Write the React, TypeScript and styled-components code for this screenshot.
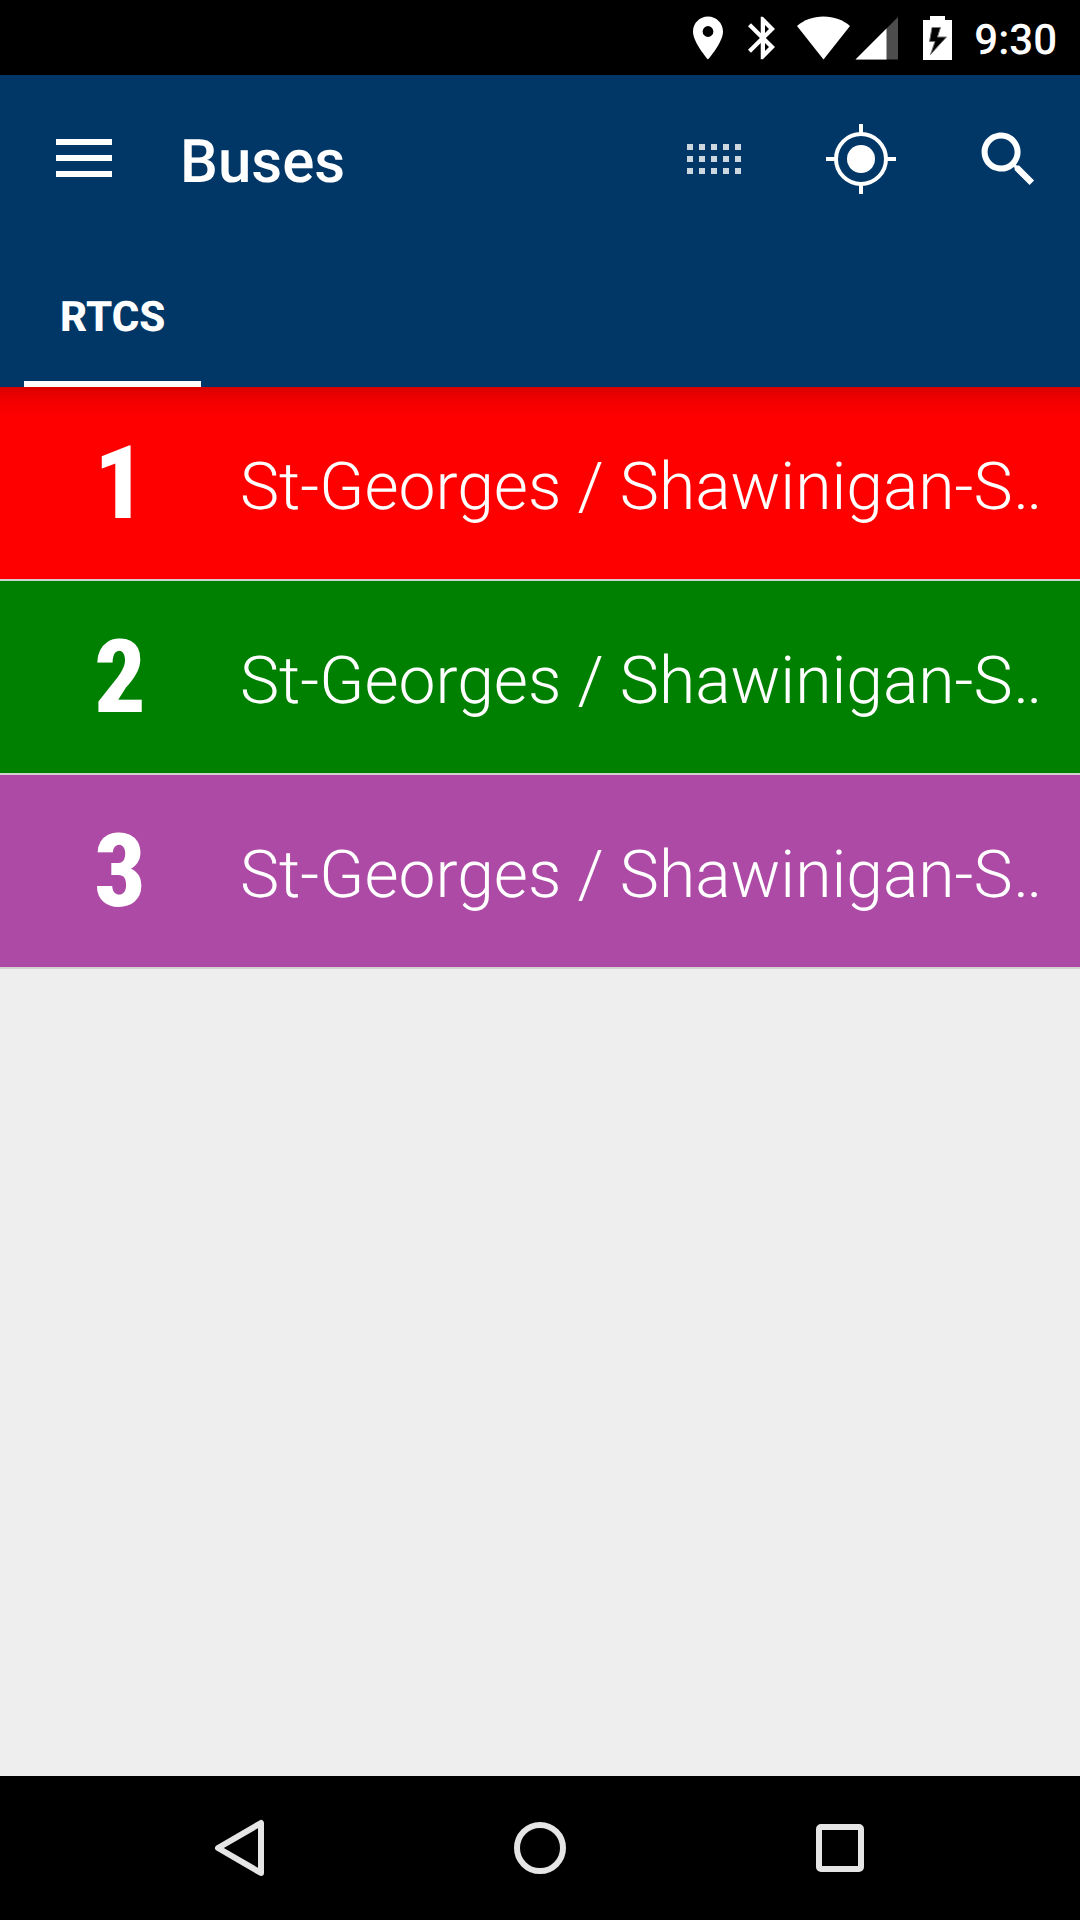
import React from "react";
import styled, { createGlobalStyle } from "styled-components";

const GlobalStyle = createGlobalStyle`
  *, *::before, *::after { box-sizing: border-box; }
  body {
    margin: 0;
    background: #eeeeee;
    font-family: Roboto, "Liberation Sans", sans-serif;
    color: #ffffff;
    text-rendering: geometricPrecision;
  }
  button, a { font: inherit; color: inherit; }
  svg { display: block; flex: none; }
`;

const Screen = styled.div`
  min-height: 100vh;
  display: flex;
  flex-direction: column;
`;

const StatusBar = styled.div`
  height: 75px;
  padding: 0 23px;
  display: flex;
  align-items: center;
  justify-content: flex-end;
  gap: 22px;
  background: #000000;
`;

const Radios = styled.div`
  display: flex;
  gap: 5px;
`;

const Clock = styled.time`
  padding-top: 6px;
  font-size: 42px;
  font-weight: 500;
  line-height: 50px;
`;

const Header = styled.header`
  position: relative;
  z-index: 1;
  background: #003767;

  &::after {
    content: "";
    position: absolute;
    top: 100%;
    left: 0;
    right: 0;
    height: 36px;
    pointer-events: none;
    background: linear-gradient(
      rgba(0, 0, 0, 0.16),
      rgba(0, 0, 0, 0.1) 16%,
      rgba(0, 0, 0, 0.04) 45%,
      rgba(0, 0, 0, 0.01) 75%,
      rgba(0, 0, 0, 0)
    );
  }
`;

const Toolbar = styled.div`
  height: 168px;
  display: flex;
  align-items: center;
`;

const IconButton = styled.button<{ $wide?: boolean }>`
  width: ${(p) => (p.$wide ? 168 : 144)}px;
  height: 168px;
  padding: 0;
  border: 0;
  background: none;
  display: flex;
  align-items: center;
  justify-content: center;
`;

const Title = styled.h1`
  flex: 1;
  margin: 0;
  padding: 6px 0 0 12px;
  font-size: 60px;
  font-weight: 500;
  line-height: 72px;
`;

const Actions = styled.div`
  display: flex;
  gap: 3px;
`;

const Tabs = styled.nav`
  height: 144px;
  padding: 0 24px;
  display: flex;
`;

const Tab = styled.a`
  padding: 10px 36px 0;
  display: flex;
  align-items: center;
  border-bottom: 6px solid #ffffff;
  font-size: 42px;
  font-weight: 800;
  text-decoration: none;
`;

const RouteList = styled.ul`
  flex: 1;
  margin: 0;
  padding: 0;
  list-style: none;
  background: #eeeeee;
`;

const RouteItem = styled.li`
  border-bottom: 2px solid #d1d1d1;
`;

const RouteLink = styled.a<{ $color: string }>`
  height: 192px;
  display: flex;
  align-items: center;
  background: ${(p) => p.$color};
  text-decoration: none;
`;

const RouteNumber = styled.span`
  width: 240px;
  flex: none;
  text-align: center;
  font-family: "Roboto Condensed", Roboto, "Liberation Sans", sans-serif;
  font-size: 102px;
  font-weight: 800;
  line-height: 120px;
`;

const RouteName = styled.span`
  flex: 1;
  min-width: 0;
  padding-top: 10px;
  overflow: hidden;
  white-space: nowrap;
  font-size: 66px;
  font-weight: 300;
  line-height: 80px;
`;

const NavBar = styled.nav`
  height: 144px;
  padding: 0 90px;
  display: flex;
  background: #000000;
`;

const NavButton = styled.button`
  flex: 1;
  padding: 0;
  border: 0;
  background: none;
  display: flex;
  align-items: center;
  justify-content: center;
`;

const PinIcon = () => (
  <svg width="33" height="44" viewBox="0 0 33 44" fill="#fff" aria-hidden="true">
    <path
      fillRule="evenodd"
      d="M15 0.5C6.700 0.500 0 7.200 0 15.500C0 26.700 15 43.500 15 43.500S30 26.700 30 15.500C30 7.200 23.300 0.500 15 0.500ZM15 20.900a5.400 5.400 0 1 1 0-10.800a5.400 5.400 0 0 1 0 10.800Z"
    />
  </svg>
);

const BluetoothIcon = () => (
  <svg width="27" height="44" viewBox="5 1.900 12.710 20.200" fill="#fff" aria-hidden="true">
    <path d="M17.71 7.71L12 2h-1v7.590L6.410 5 5 6.410 10.590 12 5 17.590 6.410 19 11 14.410V22h1l5.710-5.710-4.300-4.290 4.300-4.290zM13 5.830l1.880 1.880L13 9.590V5.830zm1.880 10.460L13 18.170v-3.760l1.880 1.880z" />
  </svg>
);

const WifiIcon = () => (
  <svg width="53" height="44" viewBox="0 0 53 44" fill="#fff" aria-hidden="true">
    <path d="M26.500 43.500L0 10C7 4 16 0.500 26.500 0.500S46 4 53 10Z" />
  </svg>
);

const SignalIcon = () => (
  <svg width="43" height="44" viewBox="0 0 43 44" aria-hidden="true">
    <path d="M0.500 43.500L43 1V43.500Z" fill="#4d4d4d" />
    <path d="M0.500 43.500L31.500 12.500V43.500Z" fill="#fff" />
  </svg>
);

const BatteryIcon = () => (
  <svg width="32" height="44" viewBox="0 0 32 44" aria-hidden="true">
    <path d="M10 0H25V4H32V44H3V4H10Z" fill="#fff" />
    <path
      d="M12 11.500H20.500L17.500 21H26.500L10.500 38.500L15 25.500H9.500Z"
      fill="#000"
      stroke="#777"
      strokeWidth="1"
    />
  </svg>
);

const MenuIcon = () => (
  <svg width="72" height="72" viewBox="0 0 72 72" fill="#fff" aria-hidden="true">
    <path d="M8 16h56v6H8zM8 32h56v6H8zM8 48h56v6H8z" />
  </svg>
);

const KeypadIcon = () => (
  <svg width="72" height="72" viewBox="0 0 72 72" fill="#fff" fillOpacity="0.8" aria-hidden="true">
    {[21, 33, 45].map((y) =>
      [9, 21, 33, 45, 57].map((x) => <rect key={`${x}-${y}`} x={x} y={y} width="6" height="6" />)
    )}
  </svg>
);

const LocateIcon = () => (
  <svg width="72" height="72" viewBox="0 0 72 72" fill="none" stroke="#fff" strokeWidth="4" aria-hidden="true">
    <circle cx="36" cy="36" r="25" />
    <circle cx="36" cy="36" r="14" fill="#fff" stroke="none" />
    <path d="M36 1V10M36 62V71M1 36H10M62 36H71" />
  </svg>
);

const SearchIcon = () => (
  <svg width="72" height="72" viewBox="-0.2 -0.2 24 24" fill="#fff" aria-hidden="true">
    <path d="M15.5 14h-.79l-.28-.27C15.41 12.59 16 11.11 16 9.5 16 5.91 13.09 3 9.5 3S3 5.91 3 9.5 5.91 16 9.5 16c1.61 0 3.09-.59 4.23-1.57l.27.28v.79l5 4.99L20.49 19l-4.99-5zm-6 0C7.01 14 5 11.99 5 9.5S7.01 5 9.5 5 14 7.01 14 9.5 11.99 14 9.5 14z" />
  </svg>
);

const NavIcon = ({ children }: { children: React.ReactNode }) => (
  <svg
    width="72"
    height="72"
    viewBox="0 0 72 72"
    fill="none"
    stroke="#e5e5e5"
    strokeWidth="6"
    strokeLinejoin="round"
    aria-hidden="true"
  >
    {children}
  </svg>
);

const routes = [
  { number: "1", name: "St-Georges / Shawinigan-S‥", color: "#ff0000" },
  { number: "2", name: "St-Georges / Shawinigan-S‥", color: "#008000" },
  { number: "3", name: "St-Georges / Shawinigan-S‥", color: "#ad4aa5" },
];

export default function App() {
  return (
    <Screen>
      <GlobalStyle />
      <StatusBar>
        <PinIcon />
        <BluetoothIcon />
        <Radios>
          <WifiIcon />
          <SignalIcon />
        </Radios>
        <BatteryIcon />
        <Clock>9:30</Clock>
      </StatusBar>
      <Header>
        <Toolbar>
          <IconButton $wide aria-label="Menu">
            <MenuIcon />
          </IconButton>
          <Title>Buses</Title>
          <Actions>
            <IconButton aria-label="Keypad">
              <KeypadIcon />
            </IconButton>
            <IconButton aria-label="Nearby">
              <LocateIcon />
            </IconButton>
            <IconButton aria-label="Search">
              <SearchIcon />
            </IconButton>
          </Actions>
        </Toolbar>
        <Tabs>
          <Tab href="#rtcs">RTCS</Tab>
        </Tabs>
      </Header>
      <RouteList>
        {routes.map((route) => (
          <RouteItem key={route.number}>
            <RouteLink href={`#route-${route.number}`} $color={route.color}>
              <RouteNumber>{route.number}</RouteNumber>
              <RouteName>{route.name}</RouteName>
            </RouteLink>
          </RouteItem>
        ))}
      </RouteList>
      <NavBar>
        <NavButton aria-label="Back">
          <NavIcon>
            <path d="M14 36L57 11V61Z" />
          </NavIcon>
        </NavButton>
        <NavButton aria-label="Home">
          <NavIcon>
            <circle cx="36" cy="36" r="23" />
          </NavIcon>
        </NavButton>
        <NavButton aria-label="Recent apps">
          <NavIcon>
            <rect x="15" y="15" width="42" height="42" rx="2" />
          </NavIcon>
        </NavButton>
      </NavBar>
    </Screen>
  );
}
